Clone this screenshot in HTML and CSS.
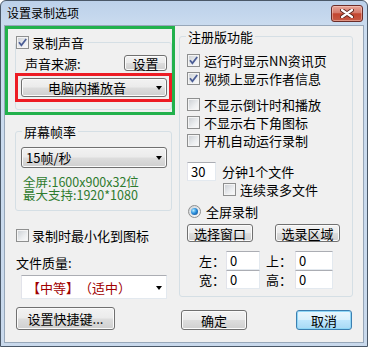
FILE: index.html
```html
<!DOCTYPE html>
<html lang="zh-CN">
<head>
<meta charset="utf-8">
<title>设置录制选项</title>
<link rel="stylesheet" href="styles.css">
</head>
<body>
<div class="window">
  <div class="titlebar">
    <span class="title">设置录制选项</span>
    <button class="close" aria-label="关闭">
      <svg width="14" height="9" viewBox="0 0 14 9"><path d="M2 1 L12 8 M12 1 L2 8" stroke="#5a231c" stroke-width="4" stroke-linecap="round"/><path d="M2 1 L12 8 M12 1 L2 8" stroke="#fff" stroke-width="2.2" stroke-linecap="round"/></svg>
    </button>
  </div>
  <div class="client">
    <div class="col col-left">
      <div class="mark-green">
        <fieldset class="group g-audio">
          <legend><span class="cb on"><svg width="11" height="11" viewBox="0 0 11 11"><path d="M2 5.3 L4.4 8.2 L9.2 2" fill="none" stroke="#4b5d95" stroke-width="1.8"/></svg></span><span class="lg-text">录制声音</span></legend>
          <div class="src-row"><span>声音来源:</span><button class="btn btn-set">设置</button></div>
          <div class="mark-red">
            <div class="combo combo-btn combo-center"><span class="combo-text">电脑内播放音</span><span class="arrow"></span></div>
          </div>
        </fieldset>
      </div>
      <fieldset class="group g-fps">
        <legend>屏幕帧率</legend>
        <div class="combo combo-btn combo-fps"><span class="combo-text">15帧/秒</span><span class="arrow"></span></div>
        <div class="info">
          <div>全屏:1600x900x32位</div>
          <div>最大支持:1920*1080</div>
        </div>
      </fieldset>
      <label class="check-row min-row"><span class="cb"></span><span>录制时最小化到图标</span></label>
      <div class="quality-label">文件质量:</div>
      <div class="combo combo-white"><span class="combo-text">【中等】（适中）</span><span class="arrow"></span></div>
      <button class="btn btn-hotkey">设置快捷键...</button>
    </div>
    <div class="col col-right">
      <fieldset class="group g-reg">
        <legend>注册版功能</legend>
        <label class="opt first"><span class="cb on"><svg width="11" height="11" viewBox="0 0 11 11"><path d="M2 5.3 L4.4 8.2 L9.2 2" fill="none" stroke="#4b5d95" stroke-width="1.8"/></svg></span><span>运行时显示NN资讯页</span></label>
        <label class="opt"><span class="cb on"><svg width="11" height="11" viewBox="0 0 11 11"><path d="M2 5.3 L4.4 8.2 L9.2 2" fill="none" stroke="#4b5d95" stroke-width="1.8"/></svg></span><span>视频上显示作者信息</span></label>
        <label class="opt sep"><span class="cb"></span><span>不显示倒计时和播放</span></label>
        <label class="opt"><span class="cb"></span><span>不显示右下角图标</span></label>
        <label class="opt"><span class="cb"></span><span>开机自动运行录制</span></label>
        <div class="file-row"><span class="tb tb-min">30</span><span>分钟1个文件</span></div>
        <label class="cont-row"><span class="cb"></span><span>连续录多文件</span></label>
        <label class="radio-row"><span class="rb"><span class="dot"></span></span><span>全屏录制</span></label>
        <div class="btn-row"><button class="btn btn-win">选择窗口</button><button class="btn btn-area">选录区域</button></div>
        <div class="coords">
          <span class="cl">左：</span><span class="tb">0</span><span class="cl cl2">上：</span><span class="tb">0</span>
          <span class="cl">宽：</span><span class="tb">0</span><span class="cl cl2">高：</span><span class="tb">0</span>
        </div>
      </fieldset>
      <div class="actions">
        <button class="btn btn-ok">确定</button>
        <button class="btn btn-cancel">取消</button>
      </div>
    </div>
  </div>
</div>
</body>
</html>
```

FILE: styles.css
```css
* { box-sizing: border-box; }
html, body { margin: 0; padding: 0; }
body {
  width: 368px;
  height: 347px;
  overflow: hidden;
  background: #ffffff;
  font-family: "Noto Sans CJK SC", "Liberation Sans", sans-serif;
  font-size: 13px;
  line-height: 13px;
  color: #000;
  text-spacing-trim: space-all;
}

.window {
  width: 368px;
  height: 347px;
  border: 1px solid #4a5868;
  border-radius: 6px 6px 0 0;
  background: linear-gradient(#bcd1ea, #cbdcef 26px, #c9d9ec);
  padding: 0 3px 3px;
  display: flex;
  flex-direction: column;
}

.titlebar {
  height: 24px;
  display: flex;
  align-items: flex-start;
  flex: none;
}
.title {
  margin: 5px 0 0 3px;
  font-size: 12px;
  line-height: 14px;
}
.close {
  margin: 4px 1px 0 auto;
  width: 32px;
  height: 17px;
  padding: 0;
  border: 1px solid #6b2c28;
  border-radius: 3px;
  background: linear-gradient(#e7a497, #d57b6c 45%, #c3452f 52%, #c65a45);
  box-shadow: inset 0 0 0 1px rgba(255,220,210,0.45);
  display: flex;
  align-items: center;
  justify-content: center;
}

.client {
  flex: 1;
  border: 1px solid #97a7b9;
  background: #f0f0f0;
  display: grid;
  grid-template-columns: 170px 174px;
  column-gap: 4px;
  align-items: start;
}

.col {
  display: flex;
  flex-direction: column;
  align-items: flex-start;
}

/* annotation marks */
.mark-green {
  border: 3px solid #22b14c;
  width: 170px;
}
.mark-red {
  border: 3px solid #ed1c24;
  margin: 2px -1px 0;
}

/* group boxes */
.group {
  margin: 0;
  padding: 0;
  border: 1px solid #d5dfe5;
  border-radius: 3px;
  min-width: 0;
}
.group legend {
  padding: 0 2px;
  margin-left: 6px;
  height: 13px;
  line-height: 13px;
  white-space: nowrap;
}

.g-audio {
  margin: 7px 0 2px 7px;
  padding: 0 0 7px;
}
.g-audio legend {
  padding: 0;
  margin-left: 0;
}
.lg-text { margin-left: 3px; vertical-align: top; }

.src-row {
  display: flex;
  justify-content: space-between;
  align-items: center;
  height: 16px;
  margin-top: 6px;
  padding: 0 4px 0 9px;
}

/* checkbox / radio */
.cb {
  width: 13px;
  height: 13px;
  flex: none;
  display: inline-flex;
  align-items: center;
  justify-content: center;
  vertical-align: top;
  border: 1px solid #8e8f8f;
  background: linear-gradient(135deg, #c9cdd2, #eceef0 60%, #fbfbfb);
  box-shadow: inset 0 0 0 1px #f4f4f4;
}
.rb {
  width: 13px;
  height: 13px;
  flex: none;
  border-radius: 50%;
  border: 1px solid #8e8f8f;
  background: linear-gradient(135deg, #cfd3d8, #fbfbfb);
  display: inline-flex;
  align-items: center;
  justify-content: center;
}
.dot {
  width: 7px;
  height: 7px;
  border-radius: 50%;
  background: radial-gradient(circle at 35% 35%, #b6ecff, #2b8fdc 45%, #0c3f80);
}

/* buttons */
.btn {
  font: inherit;
  font-size: 13px;
  line-height: 13px;
  color: #000;
  padding: 0;
  border: 1px solid #707070;
  border-radius: 3px;
  background: linear-gradient(#f2f2f2, #ebebeb 48%, #dddddd 52%, #cfcfcf);
  box-shadow: inset 0 0 0 1px #fbfbfb;
  display: inline-flex;
  align-items: center;
  justify-content: center;
  flex: none;
}
.btn-set { width: 43px; height: 16px; }
.btn-hotkey { width: 99px; height: 23px; margin: 8px 0 0 11px; }
.btn-win { width: 66px; height: 18px; }
.btn-area { width: 65px; height: 18px; }
.btn-ok { width: 66px; height: 20px; }
.btn-cancel {
  width: 56px;
  height: 20px;
  border-color: #3c7fb1;
  background: linear-gradient(#eaf6fd, #d9f0fc 48%, #bee6fd 52%, #a7d9f5);
  box-shadow: inset 0 0 0 1px #8fd6f6;
}

/* combo boxes */
.combo {
  display: flex;
  align-items: center;
  border: 1px solid #707070;
  border-radius: 3px;
}
.combo-btn {
  background: linear-gradient(#f2f2f2, #ebebeb 48%, #dddddd 52%, #cfcfcf);
  box-shadow: inset 0 0 0 1px #fbfbfb;
}
.combo-text { flex: 1; white-space: nowrap; }
.arrow {
  flex: none;
  width: 0;
  height: 0;
  margin: 1px 4px 0 8px;
  border-left: 3.5px solid transparent;
  border-right: 3.5px solid transparent;
  border-top: 4px solid #000;
}
.combo-center {
  height: 19px;
  margin: 2px 2px 2px 3px;
}
.combo-center .combo-text { text-align: center; padding-left: 4px; }

.g-fps {
  margin: 10px 0 0 10px;
  padding: 0 0 9px;
  width: 157px;
}
.combo-fps {
  height: 21px;
  margin: 9px 4px 0 5px;
  padding-left: 4px;
}
.info {
  margin-top: 7px;
  padding-left: 7px;
  color: #2e7b2e;
  font-size: 12.5px;
  line-height: 13px;
}

.check-row {
  display: flex;
  align-items: center;
  gap: 3px;
  height: 13px;
}
.min-row { margin: 18px 0 0 11px; }
.quality-label { margin: 14px 0 0 11px; }

.combo-white {
  width: 146px;
  height: 24px;
  margin: 6px 0 0 16px;
  border-radius: 0;
  border-color: #abadb3 #e3e9ef #e3e9ef #e2e3ea;
  background: #fff;
  padding-left: 5px;
  color: #a00000;
}

/* right column */
.g-reg {
  margin-top: 4px;
  padding: 0 0 7px;
  width: 174px;
}
.opt {
  display: flex;
  align-items: center;
  gap: 4px;
  height: 18px;
  padding-left: 7px;
  white-space: nowrap;
}
.opt.first { margin-top: 8px; }
.opt.sep { margin-top: 8px; }

.tb {
  display: inline-flex;
  align-items: center;
  height: 19px;
  border: 1px solid;
  border-color: #abadb3 #e3e9ef #e3e9ef #e2e3ea;
  background: #fff;
  padding-left: 3px;
}
.file-row {
  display: flex;
  align-items: center;
  gap: 6px;
  margin-top: 13px;
  padding-left: 7px;
}
.tb-min { width: 29px; }

.cont-row {
  display: flex;
  align-items: center;
  gap: 4px;
  height: 13px;
  margin-top: 2px;
  padding-left: 43px;
}
.radio-row {
  display: flex;
  align-items: center;
  gap: 5px;
  height: 13px;
  margin-top: 9px;
  padding-left: 8px;
}
.btn-row {
  display: flex;
  gap: 22px;
  margin-top: 6px;
  padding-left: 7px;
}
.coords {
  display: grid;
  grid-template-columns: 27px 34px 35px 38px;
  grid-auto-rows: 19px;
  margin-top: 9px;
  padding-left: 19px;
  align-items: center;
}
.cl2 { padding-left: 6px; }

.actions {
  display: flex;
  justify-content: space-between;
  width: 174px;
  margin-top: 13px;
  padding: 0 1px 0 2px;
}
```
